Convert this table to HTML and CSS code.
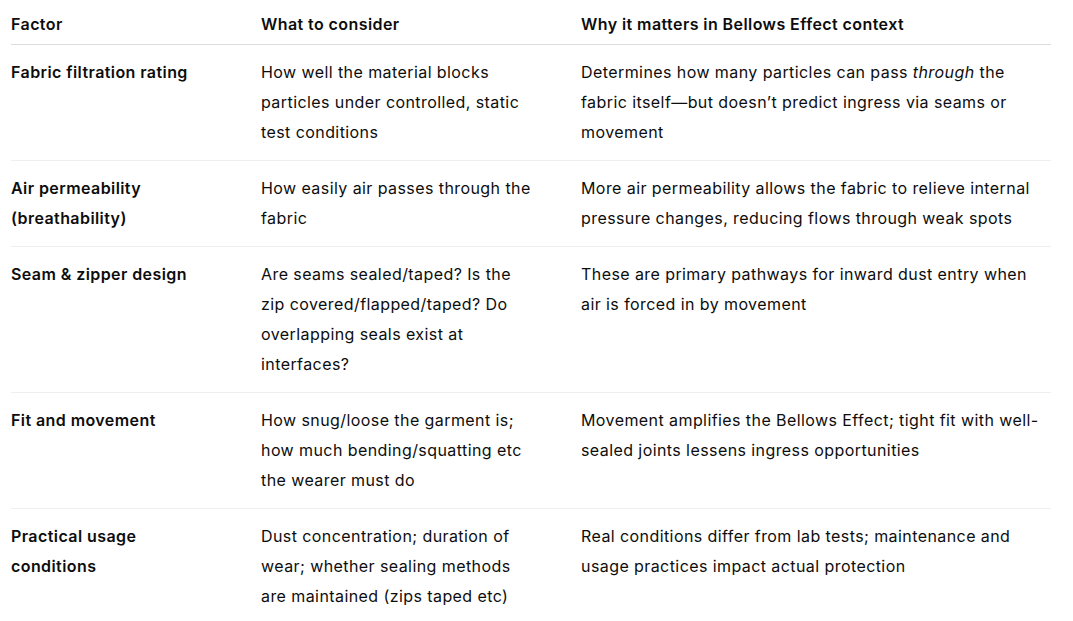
FILE: index.html
```html
<!DOCTYPE html>
<html>
<head>
<meta charset="utf-8">
<link rel="stylesheet" href="styles.css">
</head>
<body>
<table class="factors">
  <colgroup>
    <col class="c1"><col class="c2"><col class="c3">
  </colgroup>
  <thead>
    <tr>
      <th>Factor</th>
      <th>What to consider</th>
      <th>Why it matters in Bellows Effect context</th>
    </tr>
  </thead>
  <tbody>
    <tr>
      <td><strong>Fabric filtration rating</strong></td>
      <td>How well the material blocks particles under controlled, static test conditions</td>
      <td>Determines how many particles can pass <em>through</em> the fabric itself—but doesn’t predict ingress via seams or movement</td>
    </tr>
    <tr>
      <td><strong>Air permeability (breathability)</strong></td>
      <td>How easily air passes through the fabric</td>
      <td>More air permeability allows the fabric to relieve internal pressure changes, reducing flows through weak spots</td>
    </tr>
    <tr>
      <td><strong>Seam &amp; zipper design</strong></td>
      <td>Are seams sealed/taped? Is the zip covered/flapped/taped? Do overlapping seals exist at interfaces?</td>
      <td>These are primary pathways for inward dust entry when air is forced in by movement</td>
    </tr>
    <tr>
      <td><strong>Fit and movement</strong></td>
      <td>How snug/loose the garment is; how much bending/squatting etc the wearer must do</td>
      <td>Movement amplifies the Bellows Effect; tight fit with well-sealed joints lessens ingress opportunities</td>
    </tr>
    <tr>
      <td><strong>Practical usage conditions</strong></td>
      <td>Dust concentration; duration of wear; whether sealing methods are maintained (zips taped etc)</td>
      <td>Real conditions differ from lab tests; maintenance and usage practices impact actual protection</td>
    </tr>
  </tbody>
</table>
</body>
</html>
```
FILE: styles.css
```css
html, body {
  margin: 0;
  padding: 0;
  background: #ffffff;
}
body {
  font-family: Inter, "Liberation Sans", sans-serif;
  font-size: 16px;
  line-height: 30px;
  letter-spacing: 0.42px;
  color: #0d0d0d;
}
.factors {
  margin-left: 11px;
  width: 1040px;
  border-collapse: collapse;
  table-layout: fixed;
}
.c1 { width: 250px; }
.c2 { width: 320px; }
.c3 { width: 470px; }
.factors th {
  text-align: left;
  font-weight: 600;
  padding: 9px 0 5px 0;
  border-bottom: 1px solid #dcdcdc;
  vertical-align: top;
}
.factors td {
  padding: 12px 0 13px 0;
  vertical-align: top;
  border-bottom: 1px solid #efefef;
}
.factors th:nth-child(2), .factors td:nth-child(2) { padding-right: 43px; }
.factors th:nth-child(3), .factors td:nth-child(3) { padding-right: 4px; }
.factors th:first-child, .factors td:first-child { padding-right: 50px; }
.factors tbody tr:last-child td { border-bottom: none; }
.factors strong { font-weight: 600; }
```
